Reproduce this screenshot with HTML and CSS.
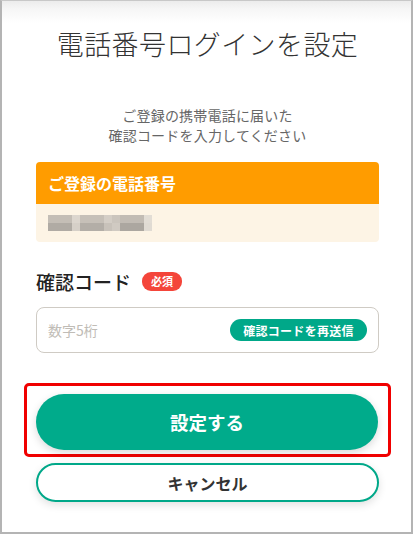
FILE: index.html
```html
<!DOCTYPE html>
<html lang="ja">
<head>
<meta charset="utf-8">
<link rel="stylesheet" href="styles.css">
</head>
<body>
<div class="frame">
  <h1 class="title">電話番号ログインを設定</h1>
  <p class="lead">ご登録の携帯電話に届いた<br>確認コードを入力してください</p>
  <div class="phone-card">
    <div class="phone-head">ご登録の電話番号</div>
    <div class="phone-body">
      <div class="mosaic">
        <div class="mosaic-row top"></div>
        <div class="mosaic-row bottom"></div>
      </div>
    </div>
  </div>
  <div class="label-row">
    <span class="label">確認コード</span>
    <span class="badge">必須</span>
  </div>
  <div class="input-box">
    <span class="placeholder">数字5桁</span>
    <button class="resend">確認コードを再送信</button>
  </div>
  <div class="highlight">
    <button class="primary">設定する</button>
  </div>
  <button class="cancel">キャンセル</button>
</div>
</body>
</html>
```

FILE: styles.css
```css
* { box-sizing: border-box; }
html, body {
  margin: 0;
  padding: 0;
  background: #fff;
}
body {
  font-family: "Noto Sans CJK JP", "Noto Sans", sans-serif;
  color: #333;
}
.frame {
  width: 413px;
  height: 534px;
  border: 2px solid #b4b4b4;
  border-top: 1px solid #c8c8c8;
  padding: 23px 32px 0 34px;
  background: linear-gradient(to bottom, #ececec 0px, #f6f6f6 8px, #ffffff 22px);
  display: flex;
  flex-direction: column;
}
.title {
  margin: 0;
  font-size: 27px;
  line-height: 40px;
  font-weight: 300;
  text-align: center;
  color: #333;
  letter-spacing: 0.4px;
}
.lead {
  margin: 41px 0 0;
  font-size: 14px;
  line-height: 20px;
  text-align: center;
  color: #666;
  font-weight: 400;
  letter-spacing: 0.2px;
}
.phone-card {
  margin-top: 17px;
  border-radius: 4px;
  overflow: hidden;
}
.phone-head {
  height: 42px;
  background: #ff9c00;
  color: #fff;
  font-weight: 700;
  font-size: 16px;
  padding-left: 12px;
  display: flex;
  align-items: center;
}
.phone-body {
  height: 38px;
  background: #fdf4e5;
  padding: 11px 0 0 12px;
}
.mosaic {
  width: 104px;
  height: 16px;
  display: flex;
  flex-direction: column;
}
.mosaic-row { height: 8px; }
.mosaic-row.top {
  background: linear-gradient(to right,
    #c4beb6 0 24px, #dcd6ce 24px 32px, #c6c0b8 32px 56px,
    #d4cec6 56px 64px, #cbc5bd 64px 72px, #c2bcb4 72px 96px, #e2ddd5 96px 104px);
}
.mosaic-row.bottom {
  background: linear-gradient(to right,
    #b0aba4 0 24px, #d6d0c8 24px 32px, #b3aea7 32px 56px,
    #c8c2ba 56px 64px, #d0cac2 64px 72px, #aca7a0 72px 96px, #e0dbd3 96px 104px);
}
.label-row {
  margin-top: 25px;
  display: flex;
  align-items: center;
  gap: 11px;
  height: 28px;
}
.label {
  font-size: 19px;
  font-weight: 500;
  color: #222;
}
.badge {
  background: #f4453a;
  color: #fff;
  font-size: 11px;
  font-weight: 700;
  border-radius: 9px;
  padding: 0 9px;
  height: 19px;
  line-height: 19px;
}
.input-box {
  margin-top: 12px;
  height: 46px;
  border: 1px solid #cfcbc4;
  border-radius: 8px;
  display: flex;
  align-items: center;
  justify-content: space-between;
  padding: 0 11px 0 11px;
}
.placeholder {
  font-size: 14px;
  color: #c0bcb6;
}
.resend {
  font-family: inherit;
  border: none;
  background: #00a889;
  color: #fff;
  font-size: 12px;
  font-weight: 700;
  height: 22px;
  width: 137px;
  border-radius: 11px;
  padding: 0;
  letter-spacing: 0.3px;
}
.highlight {
  margin: 30px -12px 0 -12px;
  border: 3px solid #f00000;
  border-radius: 5px;
  padding: 8px 10px 4px 9px;
}
.primary {
  font-family: inherit;
  display: block;
  width: 100%;
  height: 56px;
  border: none;
  border-radius: 28px;
  background: #00ab8b;
  color: #fff;
  font-size: 18.5px;
  font-weight: 700;
  box-shadow: 0 3px 8px rgba(0,0,0,0.15);
}
.cancel {
  font-family: inherit;
  margin-top: 6px;
  display: block;
  width: 100%;
  height: 39px;
  border: 2px solid #00a889;
  border-radius: 20px;
  background: #fff;
  color: #333;
  font-size: 16px;
  font-weight: 700;
  box-shadow: 0 3px 8px rgba(0,0,0,0.12);
}
```
